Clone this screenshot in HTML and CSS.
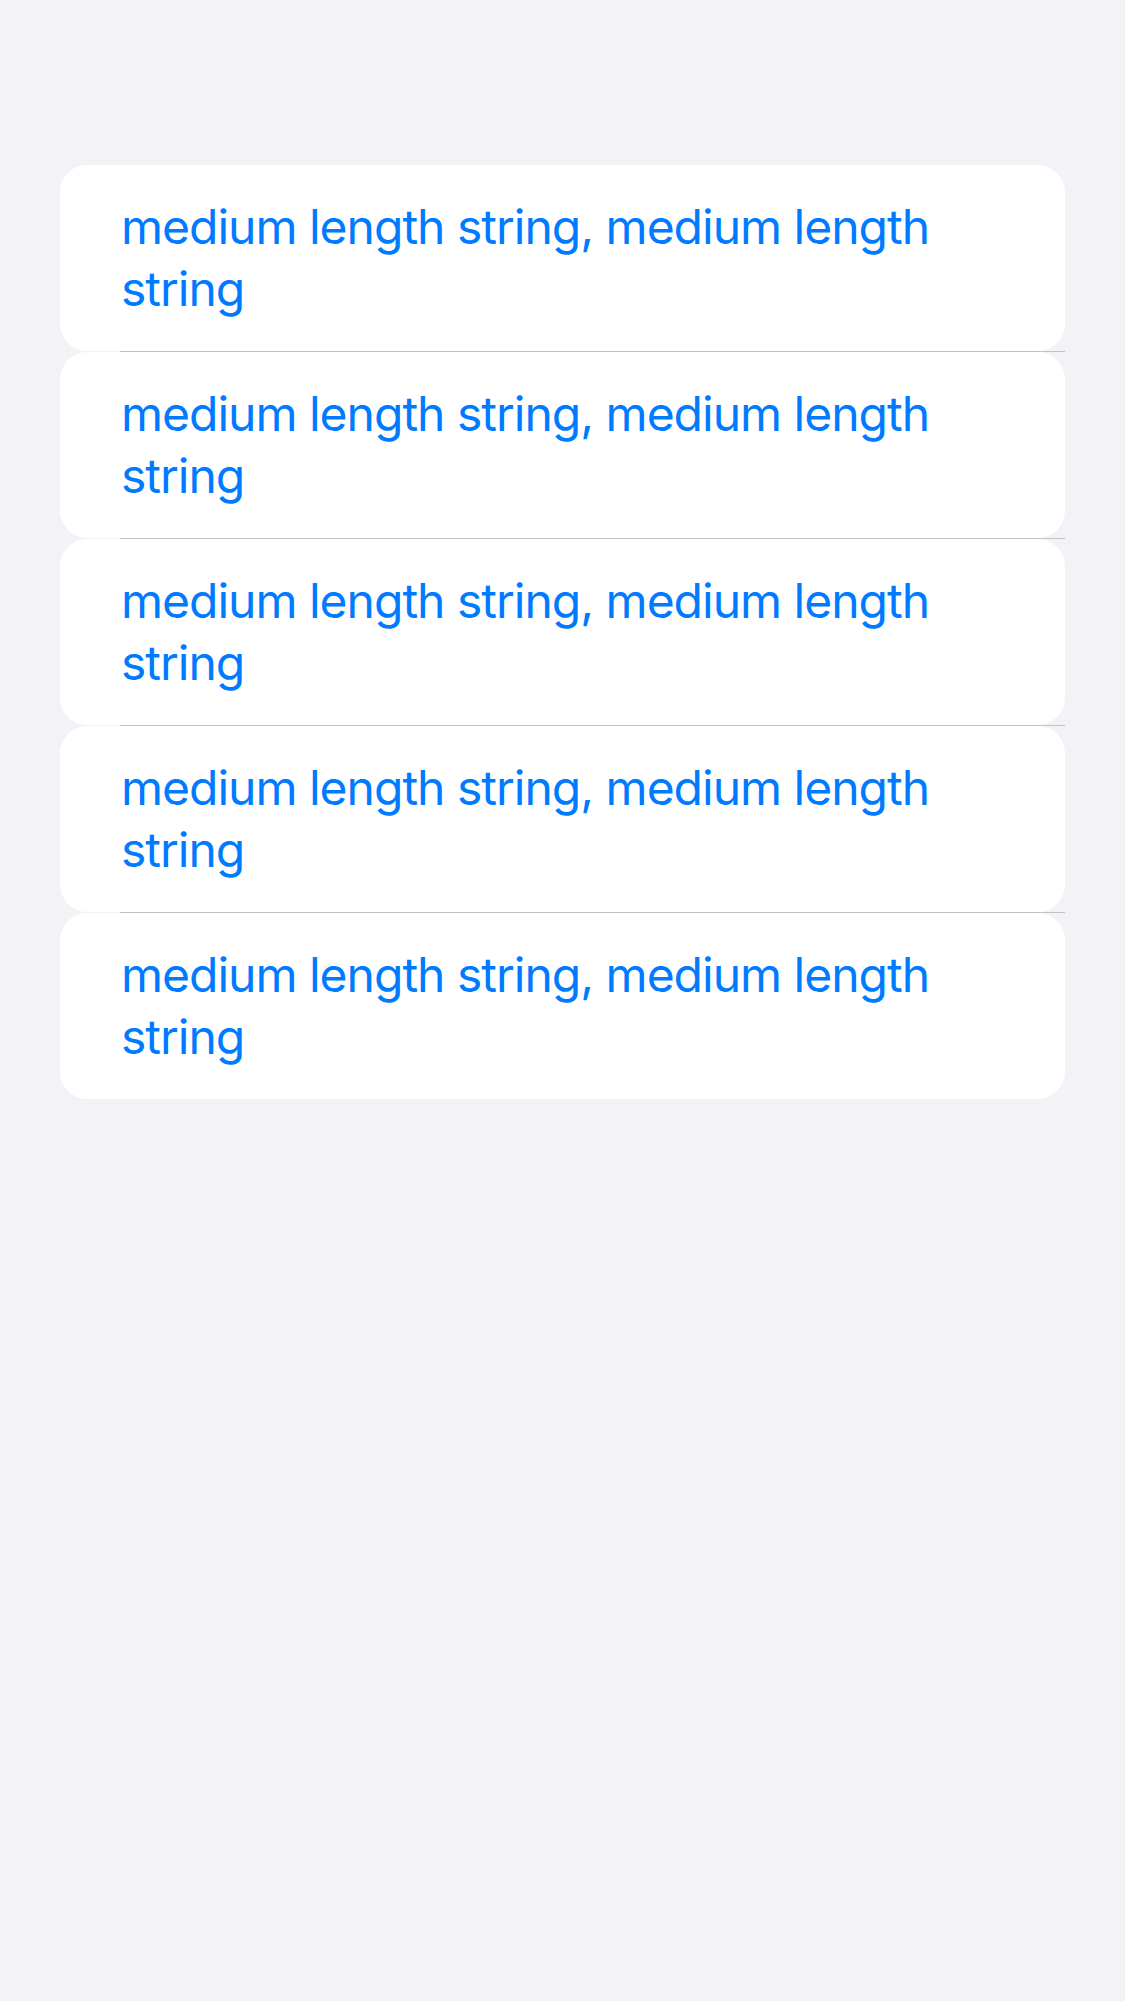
FILE: index.html
```html
<!DOCTYPE html>
<html lang="en">
<head>
<meta charset="utf-8">
<title>List</title>
<link rel="stylesheet" href="styles.css">
</head>
<body>
<main class="screen">
  <ul class="list">
    <li class="row"><span class="label">medium length string, medium length string</span></li>
    <li class="sep"></li>
    <li class="row"><span class="label">medium length string, medium length string</span></li>
    <li class="sep"></li>
    <li class="row"><span class="label">medium length string, medium length string</span></li>
    <li class="sep"></li>
    <li class="row"><span class="label">medium length string, medium length string</span></li>
    <li class="sep"></li>
    <li class="row"><span class="label">medium length string, medium length string</span></li>
  </ul>
</main>
</body>
</html>
```

FILE: styles.css
```css
html, body {
  margin: 0;
  padding: 0;
  background: #f2f2f7;
}
.screen {
  width: 1125px;
  height: 2001px;
  padding: 165px 60px 0 60px;
  box-sizing: border-box;
}
.list {
  list-style: none;
  margin: 0;
  padding: 0;
  display: flex;
  flex-direction: column;
}
.row {
  height: 186px;
  background: #ffffff;
  border-radius: 27px;
  padding: 0 60px 0 61px;
  box-sizing: border-box;
  display: flex;
  align-items: center;
}
.label {
  font-family: Inter, "Liberation Sans", sans-serif;
  font-size: 48px;
  line-height: 62px;
  color: #007aff;
  letter-spacing: -1px;
}
.sep {
  height: 1px;
  margin-left: 60px;
  background: #c3c3c6;
}
```
